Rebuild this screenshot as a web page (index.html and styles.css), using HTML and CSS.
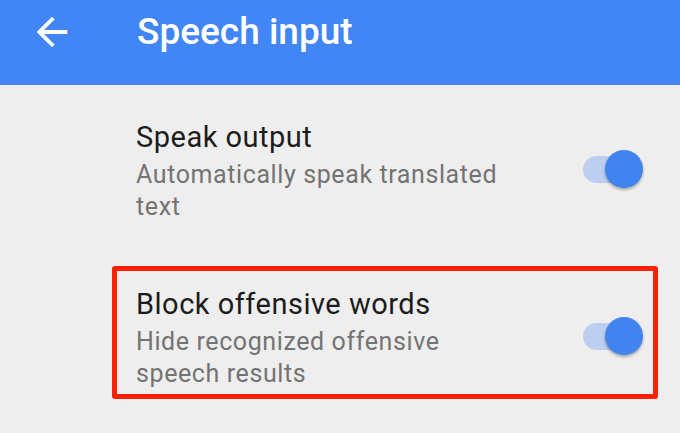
FILE: index.html
```html
<!DOCTYPE html>
<html>
    <head>
        <title>Speech input</title>
        <link rel="stylesheet" href="styles.css">
    </head>
    <body>
        <div class="toolbar">
            <div class="toolbar-row">
                <svg class="back-icon" viewBox="0 0 24 24">
                    <path d="M20 11H7.83l5.59-5.59L12 4l-8 8 8 8 1.41-1.41L7.83 13H20v-2z" fill="#ffffff"/>
                </svg>
                <p class="toolbar-title">Speech input</p>
            </div>
        </div>

        <div class="settings">
            <div class="setting">
                <div class="setting-text">
                    <p class="setting-title">Speak output</p>
                    <p class="setting-summary">Automatically speak translated text</p>
                </div>
                <div class="switch">
                    <div class="switch-track"></div>
                    <div class="switch-thumb"></div>
                </div>
            </div>

            <div class="setting marked">
                <div class="setting-text">
                    <p class="setting-title">Block offensive words</p>
                    <p class="setting-summary">Hide recognized offensive speech results</p>
                </div>
                <div class="switch">
                    <div class="switch-track"></div>
                    <div class="switch-thumb"></div>
                </div>
            </div>
        </div>
    </body>
</html>
```

FILE: styles.css
```css
body {
    margin: 0;
    background-color: #eeeeee;
    font-family: Roboto, "Liberation Sans", sans-serif;
}

p {
    margin: 0;
}

.toolbar {
    height: 85px;
    background-color: #4285f4;
}

.toolbar-row {
    height: 64px;
    display: flex;
    align-items: center;
}

.back-icon {
    width: 46px;
    height: 46px;
    margin-left: 29px;
}

.toolbar-title {
    margin-left: 62px;
    color: white;
    font-size: 37px;
    font-weight: 500;
    line-height: 36px;
}

.settings {
    padding-top: 14px;
    padding-left: 112px;
    padding-right: 22px;
}

.setting {
    display: flex;
    align-items: center;
    border: 5px solid transparent;
    border-radius: 3px;
    padding: 15px 10px 4px 19px;
    margin-bottom: 34px;
}

.setting.marked {
    border-color: #ff2000;
}

.setting-text {
    width: 372px;
}

.setting-title {
    color: #1c1c1c;
    font-size: 29px;
    letter-spacing: 0.5px;
    line-height: 36px;
    margin-bottom: 4px;
}

.setting-summary {
    color: #737373;
    font-size: 25px;
    letter-spacing: 0.6px;
    line-height: 32px;
}

.switch {
    position: relative;
    width: 60px;
    height: 38px;
    margin-left: auto;
    margin-bottom: 5px;
}

.switch-track {
    position: absolute;
    left: 0;
    top: 6px;
    width: 57px;
    height: 27px;
    border-radius: 14px;
    background-color: #bccff0;
}

.switch-thumb {
    position: absolute;
    right: 0;
    top: 0;
    width: 38px;
    height: 38px;
    border-radius: 50%;
    background-color: #4183ef;
    box-shadow: 0px 2px 3px rgba(0,0,0,0.3);
}
```
